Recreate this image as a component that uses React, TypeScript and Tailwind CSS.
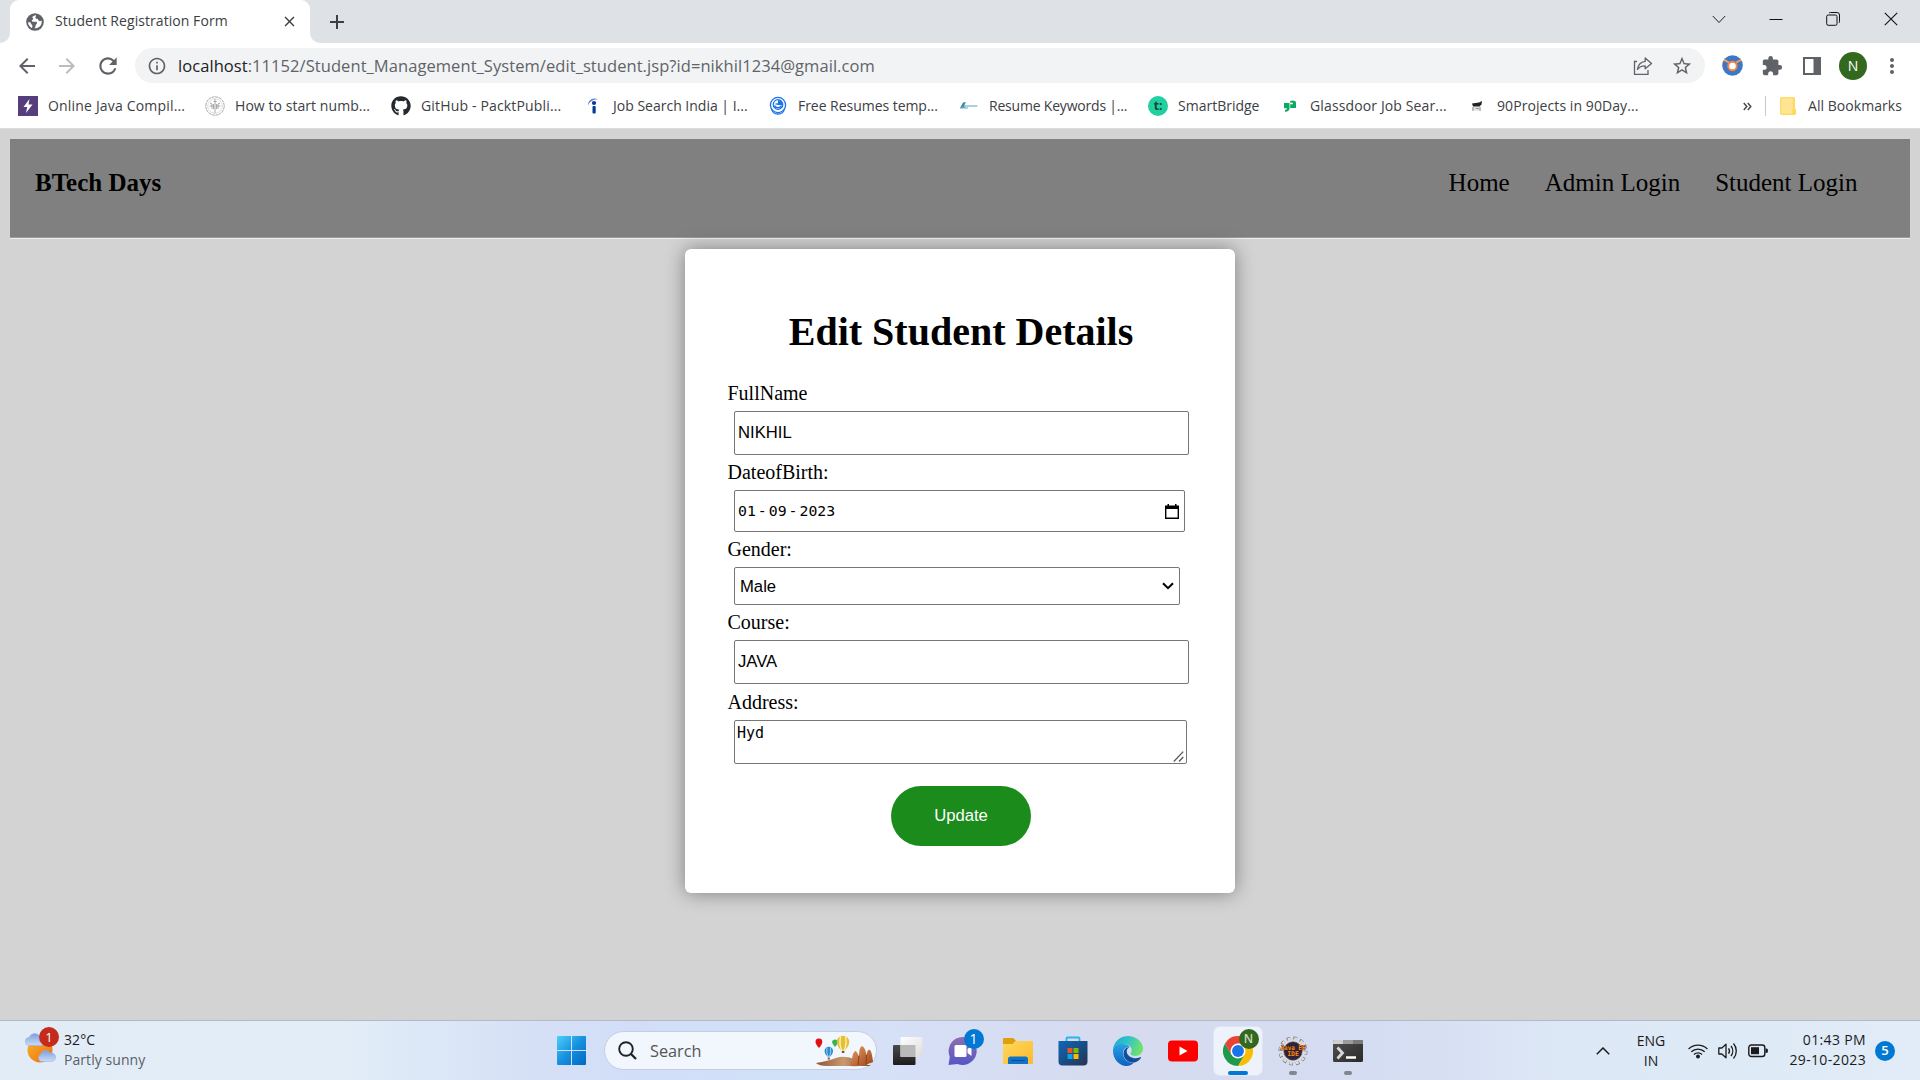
import React from 'react';
import { FaGithub } from 'react-icons/fa';
import { MdArrowBack, MdArrowForward, MdRefresh, MdInfoOutline, MdStarBorder, MdExtension, MdMoreVert, MdClose, MdAdd } from 'react-icons/md';

function GlobeIcon() {
  return (
    <svg viewBox="0 0 18 18" className="size-[18px]">
      <circle cx="9" cy="9" r="8.8" fill="#5f6368" />
      <path d="M10 2.300c-2 .2-3.400 1-3.600 2-.2.900 1 1 .9 1.700-.2.800-1.500.8-1.500 1.700 0 .8.900 1.100 1.900 1.100h1.900c.9 0 1.400.5 1.400 1.300 0 1.100-1.100 1.100-1.300 2.100-.2 1-.3 2.100-1.200 3 4.200.2 7.200-2.600 7.200-6.300 0-.5 0-.9-.2-1.400-.8.6-1.700.8-2.500.3-.9-.5-.6-1.300-1.300-1.800-.6-.4-1.700 0-2.100-.8-.5-1 .6-1.600.4-2.900z" fill="#fff" />
      <path d="M2 9.500c.2 2.300 1.500 4.200 3.700 5.400.8-.7.9-1.700.6-2.500-.3-.8-1-.9-1.300-1.700-.3-.7.1-.8-.6-1.300-.6-.3-1.500-.1-2.400.1z" fill="#fff" />
    </svg>
  );
}

function BoltIcon() {
  return (
    <svg viewBox="0 0 20 20" className="size-5">
      <rect width="20" height="20" fill="#563d7c" />
      <path d="M11.500 3 5.500 11h3.700L8 17l6.500-8.500h-4z" fill="#fff" />
    </svg>
  );
}

function SealIcon() {
  return (
    <svg viewBox="0 0 20 20" className="size-5" fill="none" stroke="#a8a8a8">
      <circle cx="10" cy="10" r="9.200" strokeDasharray="3 .6" />
      <circle cx="10" cy="10" r="7.300" strokeWidth=".4" />
      <path d="M10 3v14M8.500 5.500h3M7 13V8l-2-1M13 13V8l2-1M4.500 10h4M11.500 10h4M8.500 8v5M11.500 8v5" strokeWidth="1" />
    </svg>
  );
}

function IndeedIcon() {
  return (
    <svg viewBox="0 0 20 20" className="size-5">
      <path d="M5 9.500C5 4.500 9.500 .8 15 3.500 10.500 3.200 7 5 5 9.500z" fill="#5b7fc4" />
      <circle cx="11" cy="7" r="2.100" fill="#003a9b" />
      <rect x="9.500" y="10" width="3.200" height="7.500" rx="1" fill="#003a9b" />
    </svg>
  );
}

function ResumeIcon() {
  return (
    <svg viewBox="0 0 20 20" className="size-5" fill="none" stroke="#1a73e8">
      <circle cx="10" cy="9" r="7.600" strokeWidth="1.300" />
      <circle cx="10" cy="8.500" r="4.800" strokeWidth="1.200" />
      <path d="M10 4a5 5 0 0 1 4.500 5H10zM6 8l4-1v2z" fill="#1a73e8" stroke="none" />
      <path d="M6.500 9.500c1 3 6 3 7 0M3.500 12.500c.5 3.500 3 5.500 6.500 5.500s6-2 6.500-5.500" strokeWidth="1.300" />
    </svg>
  );
}

function KeywordIcon() {
  return (
    <svg viewBox="0 0 20 20" className="size-5">
      <path d="M1 12 4 6.500l3-.5-1.500 3 1 2.500z" fill="#3d8fa8" />
      <path d="M5 9.200h13.500v1.600H5z" fill="#9cc3df" />
      <path d="M1 12h8" stroke="#67a9c0" />
    </svg>
  );
}

function GlassdoorIcon() {
  return (
    <svg viewBox="0 0 20 20" className="size-5" fill="#0caa60">
      <path d="M4 7h5.500v5.500c0 2-1.300 3.200-4.500 3.200v-1.800c1.300 0 1.900-.4 1.900-1.600H4z" />
      <path d="M9.800 6.500c0-1.300 1-2 2.800-2s3.400.7 3.400 2.200V12h-5.800V8.200h2.600V6.800z" />
    </svg>
  );
}

function ProjectIcon() {
  return (
    <svg viewBox="0 0 20 20" className="size-5">
      <path d="M5 7.500l7-1 3-1.500-.5 3.500-2 2H6z" fill="#222" />
      <path d="M5 11h9v3.500H5z" fill="#ddd" />
      <path d="M6 11v4M9 12.500h3M13 11v4" stroke="#999" />
    </svg>
  );
}

const bookmarks = [
  { icon: <BoltIcon />, text: 'Online Java Compil...', cell: 'w-[187px]', track: 'tracking-[0.18px]' },
  { icon: <SealIcon />, text: 'How to start numb...', cell: 'w-[186px]', track: 'tracking-[0.06px]' },
  { icon: <FaGithub className="size-5 text-[#24292f]" />, text: 'GitHub - PacktPubli...', cell: 'w-[192px]', track: 'tracking-[0.16px]' },
  { icon: <IndeedIcon />, text: 'Job Search India | I...', cell: 'w-[185px]', track: 'tracking-normal' },
  { icon: <ResumeIcon />, text: 'Free Resumes temp...', cell: 'w-[191px]', track: 'tracking-[-0.04px]' },
  { icon: <KeywordIcon />, text: 'Resume Keywords |...', cell: 'w-[189px]', track: 'tracking-[-0.20px]' },
  {
    icon: <span className="flex size-5 items-center justify-center rounded-full bg-[#21cf9f] text-[12px] font-bold leading-none text-[#14463a]">t:</span>,
    text: 'SmartBridge', cell: 'w-[132px]', track: 'tracking-normal',
  },
  { icon: <GlassdoorIcon />, text: 'Glassdoor Job Sear...', cell: 'w-[187px]', track: 'tracking-[0.13px]' },
  { icon: <ProjectIcon />, text: '90Projects in 90Day...', cell: 'w-[180px]', track: 'tracking-[0.08px]' },
];

function TabStrip() {
  return (
    <div className="flex h-[43px] items-stretch bg-[#dee1e6]">
      <div className="flex w-[10px] items-end bg-white"><div className="h-full w-full rounded-br-[10px] bg-[#dee1e6]" /></div>
      <div className="w-[300px] bg-[#dee1e6]">
        <div className="flex h-full items-center rounded-t-[9px] bg-white pl-4">
          <GlobeIcon />
          <span className="ml-[11px] w-[226px] whitespace-nowrap pb-[2px] text-[14px] tracking-[0.06px] text-[#3c4043]">Student Registration Form</span>
          <MdClose className="size-[17px] text-[#3c4043]" />
        </div>
      </div>
      <div className="w-[10px] bg-white"><div className="h-full w-full rounded-bl-[10px] bg-[#dee1e6]" /></div>
      <div className="flex w-[34px] items-center justify-center"><MdAdd className="size-6 text-[#3c4043]" /></div>
      <div className="ml-auto flex h-[37px] items-center">
        <svg viewBox="0 0 14 14" className="mr-[43px] size-[14px]" fill="none" stroke="#222"><path d="M.8 4 7 10.500 13.200 4" /></svg>
        <svg viewBox="0 0 14 14" className="mr-[43px] size-[14px]" stroke="#111"><path d="M.5 7.500h13" /></svg>
        <svg viewBox="0 0 14 14" className="mr-[44px] size-[14px]" fill="none" stroke="#111"><rect x=".7" y="3" width="10.300" height="10.300" rx="1.500" /><path d="M3 1.200q.5-.7 1.500-.7h6.500q2.500 0 2.500 2.500v6.500q0 1-.7 1.500" /></svg>
        <svg viewBox="0 0 14 14" className="mr-[22px] size-[14px]" stroke="#111"><path d="M.8.8l12.400 12.400M13.200.8.8 13.200" strokeWidth="1.100" /></svg>
      </div>
    </div>
  );
}

function Toolbar() {
  return (
    <div className="flex h-[45px] items-center bg-white">
      <MdArrowBack className="ml-[15px] size-6 text-[#5f6368]" />
      <MdArrowForward className="ml-4 size-6 text-[#babcbe]" />
      <MdRefresh className="ml-4 size-[26px] text-[#5f6368]" />
      <div className="ml-[14px] flex h-[35px] w-[1570px] items-center rounded-full bg-[#f1f3f4] pl-[12px]">
        <MdInfoOutline className="size-5 text-[#5f6368]" />
        <span className="ml-[11px] whitespace-nowrap pt-px text-[16.500px] tracking-[0.065px] text-[#5f6368]">
          <span className="text-[#202124]">localhost</span>:11152/Student_Management_System/edit_student.jsp?id=nikhil1234@gmail.com
        </span>
        <svg viewBox="0 0 20 20" className="ml-auto size-5" fill="none" stroke="#5f6368" strokeWidth="1.300">
          <path d="M4 5.500H1.500v12.800H15V14" />
          <path d="M12.200 2l6.300 5.500-6.300 5.300V9.800c-4 0-6 1-7.700 3.700.4-4.500 3-7.500 7.700-8.200z" strokeLinejoin="round" />
        </svg>
        <MdStarBorder className="ml-[18px] mr-[12px] size-[22px] text-[#5f6368]" />
      </div>
      <svg viewBox="0 0 22 22" className="ml-[17px] size-[21px]">
        <circle cx="11" cy="11" r="10.800" fill="#3c78c3" />
        <path d="M1.500 6 9 10h4l7.500-4-1-1.800-7 3.800h-3L3 4.300z" fill="#f79a5a" />
        <circle cx="11" cy="11.500" r="4.500" fill="#fff" stroke="#f58345" strokeWidth="2" />
      </svg>
      <MdExtension className="ml-[18px] size-[22px] text-[#5f6368]" />
      <svg viewBox="0 0 18 18" className="ml-5 size-[18px]"><rect x="1" y="1" width="16" height="16" fill="#fff" stroke="#5f6368" strokeWidth="2" /><rect x="10.500" y="1" width="6.500" height="16" fill="#5f6368" /></svg>
      <span className="ml-[18px] flex size-7 items-center justify-center rounded-full bg-[#33691e] text-[14px] text-white">N</span>
      <MdMoreVert className="ml-[13px] size-6 text-[#5f6368]" />
    </div>
  );
}

function BookmarkBar() {
  return (
    <div className="flex h-[41px] items-center border-b border-[#dadce0] bg-white pb-[4px] pl-[18px] text-[14px] text-[#3c4043]">
      {bookmarks.map((b) => (
        <div key={b.text} className={'flex shrink-0 items-center gap-[10px] ' + b.cell}>
          <span className="flex size-5 shrink-0 items-center justify-center">{b.icon}</span>
          <span className={'whitespace-nowrap pb-[2px] ' + b.track}>{b.text}</span>
        </div>
      ))}
      <svg viewBox="0 0 9 9" className="ml-[96px] size-[9px]" fill="none" stroke="#4a4d51" strokeWidth="1.500"><path d="M.8 1l3 3.500-3 3.500M4.800 1l3 3.500-3 3.500" /></svg>
      <span className="ml-[13px] h-5 w-px bg-[#c6c9cd]" />
      <svg viewBox="0 0 16 18" className="ml-[14px] h-[18px] w-4"><rect width="15" height="18" rx="1.500" fill="#ffd966" /><rect x="1.200" y="1.200" width="11.500" height="15.500" fill="#ffe493" /><path d="M12.500 18v-5q0-1.500 1.700-1.500T16 13v3q0 2-2 2z" fill="#fddb54" /></svg>
      <span className="ml-[12px] whitespace-nowrap pb-[2px] tracking-[0.05px]">All Bookmarks</span>
    </div>
  );
}

function SiteNav() {
  return (
    <nav className="mx-[10px] flex h-[98px] items-start bg-[#808080] pl-[25px] pr-[52.500px] pt-[29px] font-['Liberation_Serif',serif] text-[25px] leading-[30px] text-black">
      <span className="font-bold">BTech Days</span>
      <div className="ml-auto flex gap-[35px]">
        <span>Home</span>
        <span>Admin Login</span>
        <span>Student Login</span>
      </div>
    </nav>
  );
}

const field = 'ml-[7px] mt-[6px] block rounded-[2px] border border-[#767676] bg-white';

function EditForm() {
  return (
    <div className="mx-auto mt-[10px] h-[644px] w-[550px] rounded-[6px] bg-white px-[42px] pt-[61px] font-['Liberation_Serif',serif] text-[20px] leading-6 text-black shadow-[0_0_19px_rgba(0,0,0,0.4)]">
      <h1 className="pl-[2px] text-center text-[40px] font-bold leading-[44px]">Edit Student Details</h1>
      <label className="mt-[27px] block pl-[0.500px]">FullName</label>
      <input className={field + " h-[44px] w-[455px] pl-[3px] font-['Liberation_Sans',sans-serif] text-[16.670px]"} defaultValue="NIKHIL" />
      <label className="mt-[5px] block pl-[0.500px]">DateofBirth:</label>
      <div className={field + " h-[42px] w-[451px]"}>
        <div className="flex h-full items-center justify-between pl-[3px] pr-[5px] font-['DejaVu_Sans_Mono',monospace] text-[14.800px]">
          <span className="flex"><span>01</span><span className="mx-[2px]">-</span><span>09</span><span className="mx-[2px]">-</span><span>2023</span></span>
          <svg viewBox="0 0 14 15" className="h-[15px] w-[14px]"><path d="M2.500 0h1.500v1.500h6V0h1.500v1.500H14V15H0V1.500h2.500zM1.400 5v8.600h11.200V5z" fillRule="evenodd" /></svg>
        </div>
      </div>
      <label className="mt-[5px] block pl-[0.500px]">Gender:</label>
      <div className={field + " h-[38px] w-[446px]"}>
        <div className="flex h-full items-center justify-between pl-[5px] pr-[5px] font-['Liberation_Sans',sans-serif] text-[16.670px]">
          <span className="pt-px">Male</span>
          <svg viewBox="0 0 12 8" className="h-2 w-3" fill="none" stroke="#000" strokeWidth="2"><path d="M1 1.200l5 5 5-5" /></svg>
        </div>
      </div>
      <label className="mt-[5px] block pl-[0.500px]">Course:</label>
      <input className={field + " h-[44px] w-[455px] pl-[3px] font-['Liberation_Sans',sans-serif] text-[16.670px]"} defaultValue="JAVA" />
      <label className="mt-[6px] block pl-[0.500px]">Address:</label>
      <div className="relative w-[460px]">
        <textarea className={field + " h-[44px] w-[453px] resize-none overflow-hidden pl-[2px] pt-[3px] font-['DejaVu_Sans_Mono',monospace] text-[15px] leading-[19px]"} defaultValue="Hyd" />
        <svg viewBox="0 0 11 11" className="absolute bottom-[2px] right-[3px] size-[11px]" stroke="#5a5a5a" strokeWidth="1.300"><path d="M.8 10.500 10.200.6M6 10.500l4.300-4.500" /></svg>
      </div>
      <button className="ml-[164px] mt-[22px] block h-[60px] w-[140px] rounded-full bg-[#1b8c1b] font-['Liberation_Sans',sans-serif] text-[16.670px] text-white">Update</button>
    </div>
  );
}

function WeatherIcon() {
  return (
    <svg viewBox="0 0 36 38" className="h-[38px] w-9">
      <defs>
        <linearGradient id="sun" x1="0" y1="0" x2="1" y2="1"><stop offset="0" stopColor="#f7b52c" /><stop offset="1" stopColor="#ee6a10" /></linearGradient>
        <linearGradient id="cloud" x1="0" y1="0" x2="0" y2="1"><stop offset="0" stopColor="#7f9fdc" /><stop offset="1" stopColor="#c9dcf6" /></linearGradient>
      </defs>
      <circle cx="15" cy="19" r="12.500" fill="url(#sun)" />
      <path d="M4.500 14.500a4 4 0 0 1-.3-8A6 6 0 0 1 15 5.500a4.500 4.500 0 0 1 1 9z" fill="url(#cloud)" stroke="#8fb0e6" strokeWidth=".5" />
      <path d="M16 30.500a4 4 0 0 1 0-7.500 5 5 0 0 1 9.300-1 4.300 4.300 0 0 1 2 8.500z" fill="url(#cloud)" stroke="#8fb0e6" strokeWidth=".5" />
    </svg>
  );
}

function Balloons() {
  return (
    <svg viewBox="0 0 58 34" className="h-[34px] w-[58px]">
      <defs>
        <linearGradient id="rock" x1="0" y1="0" x2="1" y2="1"><stop offset="0" stopColor="#e89a66" /><stop offset="1" stopColor="#9a4519" /></linearGradient>
        <linearGradient id="dune" x1="0" y1="0" x2="1" y2="0"><stop offset="0" stopColor="#8a5532" /><stop offset=".5" stopColor="#c99a72" /><stop offset="1" stopColor="#7a4a2c" /></linearGradient>
      </defs>
      <path d="M1 29q12-2 20-5t18 1l17 7H12Q4 32 1 29z" fill="url(#dune)" />
      <path d="M35 32l2-7q1-8 4-8l3 5q0-9 3-10 3 1 4.500 9 1-6 3.500-5 2 2 3 12-10 5-23 4z" fill="url(#rock)" />
      <path d="M44 22l-1 9M51.500 21l-.5 9" stroke="#8d3f17" fill="none" />
      <path d="M.5 8a3.300 3.300 0 0 1 6.800 0q0 2-3.300 6Q.5 10 .5 8z" fill="#e01010" />
      <path d="M17 7.500a3.300 3.300 0 0 1 6 0q0 2-3 5.500-3-3.500-3-5.500z" fill="#2fb457" />
      <path d="M9.500 17a4.200 4.200 0 0 1 8.600 0q0 3-3 5.500h-2.600q-3-2.500-3-5.500z" fill="#2d8cc8" />
      <path d="M12 13.500q-1 5 1 9M15.500 13.500q1 5-1 9" stroke="#9bd2f2" fill="none" /><rect x="12.800" y="23.500" width="2" height="2" fill="#7a5a3a" />
      <path d="M21.800 8a6.200 6.200 0 0 1 12.400 0q0 4-4.500 8.500h-3.400Q21.800 12 21.800 8z" fill="#e5bf36" />
      <path d="M25.500 2.300q-1.500 8 1.200 14M30.500 2.300q1.500 8-1.200 14" stroke="#fff3c0" strokeWidth="1.300" fill="none" /><rect x="26.800" y="17" width="2.600" height="2" fill="#7a5a3a" />
    </svg>
  );
}

function TaskViewIcon() {
  return (
    <svg viewBox="0 0 30 30" className="size-[30px]">
      <defs>
        <linearGradient id="tvd" x1="0" y1="0" x2="0" y2="1"><stop offset="0" stopColor="#4a4a4a" /><stop offset="1" stopColor="#1c1c1c" /></linearGradient>
        <linearGradient id="tvl" x1="0" y1="0" x2="1" y2="1"><stop offset="0" stopColor="#fff" /><stop offset="1" stopColor="#dcdcdc" /></linearGradient>
      </defs>
      <rect x="0" y="9" width="22.500" height="20" rx="1" fill="url(#tvd)" />
      <rect x="7.500" y="1" width="22" height="20" rx="1" fill="url(#tvl)" />
      <rect x="7.500" y="9" width="15" height="12" fill="#b9b9b9" />
    </svg>
  );
}

function ChatIcon() {
  return (
    <svg viewBox="0 0 30 30" className="size-[30px]">
      <defs><linearGradient id="chat" x1="0" y1="0" x2="0" y2="1"><stop offset="0" stopColor="#8e6fae" /><stop offset="1" stopColor="#5556c6" /></linearGradient></defs>
      <path d="M15 1a14 14 0 1 1-5.500 27L.5 29l1.300-8.300A14 14 0 0 1 15 1z" fill="url(#chat)" />
      <rect x="6.500" y="9" width="12" height="12" rx="1.500" fill="#fff" />
      <path d="M19.500 13l4-3v10l-4-3z" fill="#fff" />
    </svg>
  );
}

function FolderIcon() {
  return (
    <svg viewBox="0 0 30 30" className="size-[30px]">
      <defs><linearGradient id="fold" x1="0" y1="0" x2="1" y2="1"><stop offset="0" stopColor="#ffd75e" /><stop offset="1" stopColor="#fdbb2d" /></linearGradient></defs>
      <path d="M0 3q0-1 1-1h8.500q1 0 2 1.200L13 5v6H0z" fill="#e0a00c" />
      <path d="M0 8h9.500l3-3H29q1 0 1 1v21q0 1-1 1H1q-1 0-1-1z" fill="url(#fold)" />
      <path d="M5 28v-5q0-2.500 2.500-2.500h15Q25 20.500 25 23v5z" fill="#1173c7" />
      <path d="M8.500 24.500h13" stroke="#0c4f91" strokeWidth="1.200" />
    </svg>
  );
}

function StoreIcon() {
  return (
    <svg viewBox="0 0 30 30" className="size-[30px]">
      <defs><linearGradient id="store" x1="0" y1="0" x2="1" y2="1"><stop offset="0" stopColor="#0f68b8" /><stop offset="1" stopColor="#243352" /></linearGradient></defs>
      <path d="M8.500 6V2.500Q8.500 1.500 9.500 1.500h11q1 0 1 1V6" fill="none" stroke="#29b4ee" strokeWidth="1.800" />
      <path d="M.5 5h29v20.500q0 4-4 4h-21q-4 0-4-4z" fill="url(#store)" />
      <path d="M9.500 12h5v5h-5z" fill="#f25022" /><path d="M15.500 12h5v5h-5z" fill="#7fba00" />
      <path d="M9.500 18h5v5h-5z" fill="#00a4ef" /><path d="M15.500 18h5v5h-5z" fill="#ffb900" />
    </svg>
  );
}

function EdgeIcon() {
  return (
    <svg viewBox="0 0 30 30" className="size-[30px]">
      <defs>
        <linearGradient id="eg1" x1="0" y1="0" x2="1" y2=".3"><stop offset="0" stopColor="#1fa6d8" /><stop offset=".5" stopColor="#2fc3c9" /><stop offset="1" stopColor="#6de070" /></linearGradient>
        <linearGradient id="eg2" x1="0" y1="0" x2="0" y2="1"><stop offset="0" stopColor="#2aa3e6" /><stop offset="1" stopColor="#0c62c0" /></linearGradient>
      </defs>
      <path d="M0 14C.5 6 7 0 15 0s15 6 15 12.500c0 4.500-3.500 7.500-7.500 7.500-3 0-5-1-5-2.200 0-.8 1.200-1.300 1.200-3.800 0-3-3-5.500-7-5.500C5 8.500 1 11 0 14z" fill="url(#eg1)" />
      <path d="M0 14c1-4 5.500-6.500 10.500-6 3 .3 5 1.500 6.300 3-4-.5-6.800 2.500-6.800 6 0 6 5.500 10.500 10.500 10-2 1.900-4 3-7 3C6 30 0 23 0 15z" fill="url(#eg2)" />
      <path d="M16.500 11C12.500 11.500 10.500 14 10.500 17.500c0 6 6 10 11 9 3-.8 5.500-2.800 6.500-4.800.2-.6-.3-.8-.8-.5C21.500 24 15 21 13.800 16.500c-.5-2.300.8-4.500 2.700-5.500z" fill="#0e4e9c" />
    </svg>
  );
}

function YoutubeIcon() {
  return (
    <svg viewBox="0 0 30 30" className="size-[30px]">
      <rect x="0" y="4.500" width="30" height="21" rx="4" fill="#f00" />
      <path d="M11.500 10.500v9L19.500 15z" fill="#fff" />
    </svg>
  );
}

function ChromeIcon() {
  return (
    <svg viewBox="0 0 48 48" className="size-[30px]">
      <path d="M24 12h20.800A24 24 0 0 1 24 48L34.400 30z" fill="#fbbc04" />
      <path d="M13.600 30 3.200 12A24 24 0 0 0 24 48L34.400 30z" fill="#1e9a4a" />
      <path d="M24 12h20.800A24 24 0 0 0 3.200 12L13.600 30z" fill="#ea4335" />
      <circle cx="24" cy="24" r="12" fill="#fff" />
      <circle cx="24" cy="24" r="9.500" fill="#1a73e8" />
    </svg>
  );
}

function JavaIcon() {
  return (
    <svg viewBox="0 0 30 30" className="size-[30px]">
      <circle cx="15" cy="15" r="12.600" fill="none" stroke="#777" strokeWidth="3.800" strokeDasharray="3.600 3" />
      <circle cx="15" cy="15" r="12.500" fill="none" stroke="#dedede" strokeWidth="2.800" strokeDasharray="2.800 3.800" strokeDashoffset="-.4" />
      <circle cx="15" cy="15" r="10.300" fill="#2b2342" stroke="#dcdcdc" strokeWidth="2.200" />
      <circle cx="15" cy="15" r="9.200" fill="none" stroke="#555" strokeWidth=".6" />
      <text x="15" y="13.500" fontSize="6.500" fontWeight="bold" textAnchor="middle" fill="#ff8a1c" stroke="#3a1c08" strokeWidth=".7" paintOrder="stroke" textLength="25" lengthAdjust="spacingAndGlyphs" fontFamily="DejaVu Sans Mono, monospace">Java EE</text>
      <text x="15" y="20" fontSize="6.500" fontWeight="bold" textAnchor="middle" fill="#ff8a1c" stroke="#3a1c08" strokeWidth=".7" paintOrder="stroke" fontFamily="DejaVu Sans Mono, monospace">IDE</text>
    </svg>
  );
}

function TerminalIcon() {
  return (
    <svg viewBox="0 0 30 30" className="size-[30px]">
      <defs><linearGradient id="term" x1="0" y1="0" x2="1" y2="1"><stop offset="0" stopColor="#505050" /><stop offset="1" stopColor="#2a2a2a" /></linearGradient></defs>
      <rect x="0" y="4" width="30" height="22" rx="1.500" fill="url(#term)" />
      <path d="M1.500 4H10v4H0V5.500Q0 4 1.500 4z" fill="#cfcfcf" /><path d="M10 4h10v4H10z" fill="#9b9b9b" /><path d="M20 4h8.500Q30 4 30 5.500V8H20z" fill="#7a7a7a" />
      <path d="M4.500 11.500 9.500 17l-5 5.500" fill="none" stroke="#d8d8d8" strokeWidth="2.800" /><path d="M13 21.500h10" stroke="#fff" strokeWidth="2.500" />
    </svg>
  );
}

const apps = [
  { name: 'task-view', icon: <TaskViewIcon />, badge: null, active: false, running: false },
  { name: 'chat', icon: <ChatIcon />, badge: <span className="absolute -top-[7px] left-[16px] flex size-5 items-center justify-center rounded-full bg-[#0078d4] text-[14px] leading-none text-white">1</span>, active: false, running: false },
  { name: 'files', icon: <FolderIcon />, badge: null, active: false, running: false },
  { name: 'store', icon: <StoreIcon />, badge: null, active: false, running: false },
  { name: 'edge', icon: <EdgeIcon />, badge: null, active: false, running: false },
  { name: 'youtube', icon: <YoutubeIcon />, badge: null, active: false, running: false },
  { name: 'chrome', icon: <ChromeIcon />, badge: <span className="absolute -top-[7px] left-[16px] flex size-5 items-center justify-center rounded-full bg-[#33691e] text-[12px] font-semibold leading-none text-[#c9dcc0]">N</span>, active: true, running: false },
  { name: 'java', icon: <JavaIcon />, badge: null, active: false, running: true },
  { name: 'terminal', icon: <TerminalIcon />, badge: null, active: false, running: true },
];

function Taskbar() {
  return (
    <div className="flex h-[60px] items-center border-t border-[#b3b9c9] bg-[linear-gradient(90deg,#e2ecf7_0%,#e2edf8_18%,#d6e1f6_27%,#d2def8_33%,#d0e1f7_41%,#d6e0f7_46%,#d6dbef_58%,#d5ddf2_72%,#dde8f6_82%,#e1ecf8_100%)] text-[14px] text-[#1b1b1b]">
      <div className="relative ml-[25px] flex w-[532px] items-center pb-[1px]">
        <WeatherIcon />
        <span className="absolute -top-[3px] left-[14px] flex size-5 items-center justify-center rounded-full bg-[#c42b1c] text-[13px] leading-none text-white">1</span>
        <div className="ml-[3px] leading-5 tracking-[0.06px]"><div>32°C</div><div className="text-[#5a5f66]">Partly sunny</div></div>
      </div>
      <svg viewBox="0 0 29 29" className="size-[29px]">
        <defs><linearGradient id="win" x1="0" y1="0" x2="1" y2="1"><stop offset="0" stopColor="#4dd0fb" /><stop offset=".5" stopColor="#1690dd" /><stop offset="1" stopColor="#0067c5" /></linearGradient></defs>
        <path d="M1 0h13v14H0V1Q0 0 1 0zM15 0h13q1 0 1 1v13H15zM0 15h14v14H1q-1 0-1-1zM15 15h14v13q0 1-1 1H15z" fill="url(#win)" />
      </svg>
      <div className="ml-[18px] flex h-[39px] w-[273px] items-center rounded-full border border-[#c3cde3] bg-[#f2f6fd] pl-[13px]">
        <svg viewBox="0 0 19 19" className="size-[19px]" fill="none" stroke="#222"><circle cx="8" cy="8" r="6.800" strokeWidth="1.900" /><path d="M13 13l5 5" strokeWidth="2.300" /></svg>
        <span className="ml-[13px] w-[165px] pt-px text-[16.300px] text-[#555]">Search</span>
        <Balloons />
      </div>
      <div className="ml-[3px] flex">
        {apps.map((a) => (
          <div key={a.name} className="flex h-[59px] w-[55px] items-center justify-center">
            <div className={a.active ? 'flex h-[48px] w-[48px] flex-col items-center rounded-[5px] bg-[#edf2fb] pt-[9px] outline outline-[#dfe5f2]' : 'flex h-[48px] w-[48px] flex-col items-center pt-[9px]'}>
              <div className="relative size-[30px]">{a.icon}{a.badge}</div>
              {a.active && <span className="mt-[5px] h-1 w-5 rounded-full bg-[#0078d4]" />}
              {a.running && <span className="mt-[5px] h-1 w-2 rounded-full bg-[#82868f]" />}
            </div>
          </div>
        ))}
      </div>
      <svg viewBox="0 0 14 8" className="ml-auto h-2 w-[14px]" fill="none" stroke="#1b1b1b" strokeWidth="1.500"><path d="M.8 7.200 7 1l6.200 6.200" /></svg>
      <div className="ml-[24px] w-[34px] text-center leading-5">ENG<br />IN</div>
      <svg viewBox="0 0 20 16" className="ml-[20px] h-4 w-5" fill="none" stroke="#1b1b1b" strokeWidth="1.300"><path d="M.6 6a13.500 13.500 0 0 1 18.800 0M3.300 8.800a9.500 9.500 0 0 1 13.400 0M6 11.500a5.600 5.600 0 0 1 8 0" /><circle cx="10" cy="13.500" r="1.300" fill="#1b1b1b" /></svg>
      <svg viewBox="0 0 20 18" className="ml-[10px] h-[18px] w-5" fill="none" stroke="#1b1b1b" strokeWidth="1.300"><path d="M.8 6h3L8 2.200v13.600L3.800 12h-3z" strokeLinejoin="round" /><path d="M10.500 6.300a4.500 4.500 0 0 1 0 5.400M13 4a8 8 0 0 1 0 10M15.500 1.500a11.500 11.500 0 0 1 0 15" /></svg>
      <svg viewBox="0 0 20 14" className="ml-[10px] h-[14px] w-5"><rect x=".8" y="1" width="16" height="11.500" rx="2.500" fill="none" stroke="#1b1b1b" strokeWidth="1.400" /><rect x="3" y="3.200" width="8" height="7" fill="#1b1b1b" /><path d="M17.500 4.500h1q1.500 0 1.500 2.200T18.500 9h-1z" fill="#1b1b1b" /></svg>
      <div className="w-[98px] pb-px text-right leading-5 tracking-[0.350px]">01:43 PM<br />29-10-2023</div>
      <span className="ml-[9px] mr-[25px] flex size-5 items-center justify-center rounded-full bg-[#0078d4] text-[13px] font-semibold leading-none text-white">5</span>
    </div>
  );
}

export default function App() {
  return (
    <div className="flex h-[1080px] w-[1920px] flex-col overflow-hidden bg-[#d3d3d3] font-['Open_Sans',sans-serif]">
      <TabStrip />
      <Toolbar />
      <BookmarkBar />
      <main className="flex-1 pt-[10px]">
        <SiteNav />
        <div className="mx-[10px] h-[2px] border-b border-t border-b-[#eee] border-t-[#9a9a9a]" />
        <EditForm />
      </main>
      <Taskbar />
    </div>
  );
}
